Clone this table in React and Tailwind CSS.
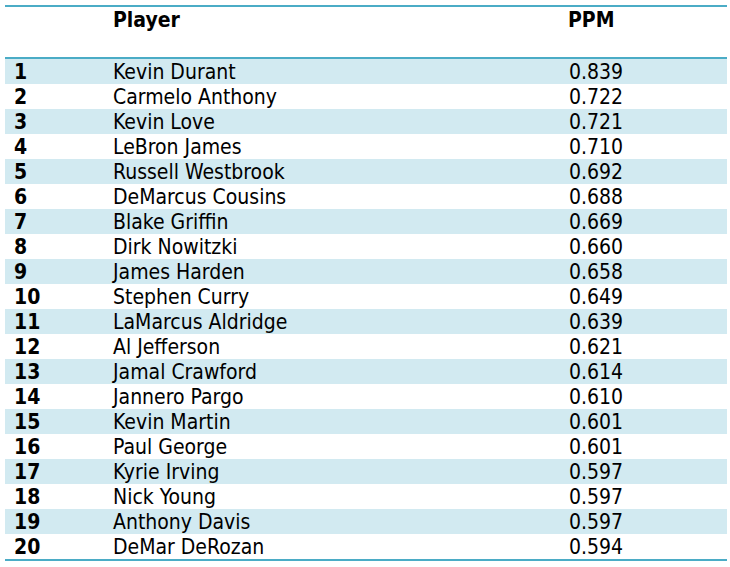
import React from "react";

const players = [
  ["1", "Kevin Durant", "0.839"],
  ["2", "Carmelo Anthony", "0.722"],
  ["3", "Kevin Love", "0.721"],
  ["4", "LeBron James", "0.710"],
  ["5", "Russell Westbrook", "0.692"],
  ["6", "DeMarcus Cousins", "0.688"],
  ["7", "Blake Griffin", "0.669"],
  ["8", "Dirk Nowitzki", "0.660"],
  ["9", "James Harden", "0.658"],
  ["10", "Stephen Curry", "0.649"],
  ["11", "LaMarcus Aldridge", "0.639"],
  ["12", "Al Jefferson", "0.621"],
  ["13", "Jamal Crawford", "0.614"],
  ["14", "Jannero Pargo", "0.610"],
  ["15", "Kevin Martin", "0.601"],
  ["16", "Paul George", "0.601"],
  ["17", "Kyrie Irving", "0.597"],
  ["18", "Nick Young", "0.597"],
  ["19", "Anthony Davis", "0.597"],
  ["20", "DeMar DeRozan", "0.594"],
];

export default function App() {
  return (
    <div
      className="w-[730px] h-[567px] bg-white pt-[5px] pl-[5px] pr-[3px] text-black"
      style={{ fontFamily: '"DejaVu Sans Condensed", "DejaVu Sans", sans-serif' }}
    >
      <div className="border-t-2 border-b-2 border-[#4bacc6] text-[21px] leading-[25px]">
        {/* header */}
        <div className="grid grid-cols-[100px_455px_1fr] h-[52px] border-b-2 border-[#4bacc6] font-bold pt-[1px]">
          <div className="pl-[9px]"></div>
          <div className="pl-[8px]">Player</div>
          <div className="pl-[8px]">PPM</div>
        </div>

        {players.map(([rank, name, ppm], i) => (
          <div
            key={rank}
            className={
              "grid grid-cols-[100px_455px_1fr] h-[25px] pt-[1px] " +
              (i % 2 === 0 ? "bg-[#d2eaf1]" : "bg-white")
            }
          >
            <div className="pl-[9px] font-bold">{rank}</div>
            <div className="pl-[8px]">{name}</div>
            <div className="pl-[9px]">{ppm}</div>
          </div>
        ))}
      </div>
    </div>
  );
}
